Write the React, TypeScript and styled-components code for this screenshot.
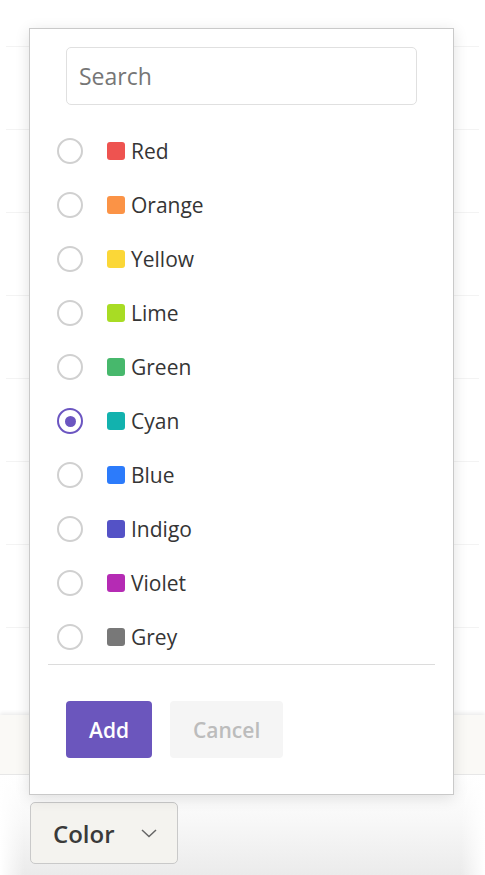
import React, { useState } from 'react';
import styled, { createGlobalStyle } from 'styled-components';

const GlobalStyle = createGlobalStyle`
  html, body {
    margin: 0;
    padding: 0;
    background: #ffffff;
    font-family: "Open Sans", "Noto Sans", sans-serif;
  }
`;

const COLORS = [
  { name: 'Red', swatch: '#ee5350' },
  { name: 'Orange', swatch: '#fb9346' },
  { name: 'Yellow', swatch: '#fbd737' },
  { name: 'Lime', swatch: '#a8dc24' },
  { name: 'Green', swatch: '#47b86c' },
  { name: 'Cyan', swatch: '#12b2ae' },
  { name: 'Blue', swatch: '#2c7bfb' },
  { name: 'Indigo', swatch: '#5452c6' },
  { name: 'Violet', swatch: '#b52bb4' },
  { name: 'Grey', swatch: '#787878' },
];

/** 색상 필터 팝오버 */
const App = () => {
  const [selected, setSelected] = useState('Cyan');

  return (
    <>
      <GlobalStyle />
      <Page>
        <BackList>
          {Array.from({ length: 8 }).map((_, i) => (
            <BackRow key={i} />
          ))}
        </BackList>
        <Band />
        <Footer>
          <ColorButton type="button">
            Color
            <svg width="16" height="9" viewBox="0 0 16 9" fill="none">
              <path d="M1 1l7 6.5L15 1" stroke="#666" strokeWidth="1.5" />
            </svg>
          </ColorButton>
        </Footer>

        <Popover>
          <SearchWrap>
            <SearchInput placeholder="Search" />
          </SearchWrap>
          <OptionList>
            {COLORS.map((c) => (
              <Option key={c.name} onClick={() => setSelected(c.name)}>
                <Radio $checked={selected === c.name} />
                <Swatch $color={c.swatch} />
                <OptionLabel>{c.name}</OptionLabel>
              </Option>
            ))}
          </OptionList>
          <Divider />
          <Actions>
            <Button $primary type="button">
              Add
            </Button>
            <Button type="button">Cancel</Button>
          </Actions>
        </Popover>
      </Page>
    </>
  );
};

export default App;

const Page = styled.div`
  position: relative;
  width: 485px;
  height: 875px;
  overflow: hidden;
  background: #ffffff;
`;

const BackList = styled.div`
  padding-top: 46px;
`;

const BackRow = styled.div`
  height: 83px;
  margin: 0 6px;
  box-sizing: border-box;
  border-top: 1px solid #f3f3f3;
`;

const Band = styled.div`
  margin-top: 5px;
  height: 60px;
  box-sizing: border-box;
  background: #faf9f6;
  border-bottom: 1px solid #e7e7e7;
  box-shadow: 0 -2px 4px rgba(0, 0, 0, 0.08);
`;

const Footer = styled.div`
  height: 100px;
  padding: 27px 0 0 30px;
  box-sizing: border-box;
  background:
    linear-gradient(to right, #ffffff, rgba(255, 255, 255, 0) 5%, rgba(255, 255, 255, 0) 95%, #ffffff),
    linear-gradient(to bottom, #ffffff, #f8f8f8 45%, #ebebeb);
`;

const ColorButton = styled.button`
  display: flex;
  align-items: center;
  justify-content: space-between;
  width: 148px;
  height: 62px;
  padding: 0 20px 0 22px;
  box-sizing: border-box;
  background: #f4f3ef;
  border: 1px solid #c9c9c9;
  border-radius: 5px;
  font-family: inherit;
  font-size: 24px;
  font-weight: 600;
  color: #3a3a3a;
  cursor: pointer;
`;

const Popover = styled.div`
  position: absolute;
  left: 29px;
  top: 28px;
  width: 425px;
  box-sizing: border-box;
  background: #ffffff;
  border: 1px solid #c9c9c9;
  box-shadow: 0 3px 14px rgba(0, 0, 0, 0.12);
  padding-bottom: 36px;
`;

const SearchWrap = styled.div`
  padding: 18px 36px 0;
`;

const SearchInput = styled.input`
  display: block;
  width: 100%;
  height: 58px;
  box-sizing: border-box;
  padding: 0 12px;
  border: 1px solid #e0e0e0;
  border-radius: 5px;
  font-family: inherit;
  font-size: 23px;
  color: #333;
  outline: none;

  &::placeholder {
    color: #767676;
  }
`;

const OptionList = styled.div`
  padding: 19px 0 0 27px;
`;

const Option = styled.div`
  display: flex;
  align-items: center;
  height: 54px;
  cursor: pointer;
`;

const Radio = styled.span<{ $checked: boolean }>`
  width: 26px;
  height: 26px;
  box-sizing: border-box;
  border-radius: 50%;
  border: 2px solid ${(p) => (p.$checked ? '#6b55c1' : '#d0d0d0')};
  margin-right: 24px;
  display: flex;
  align-items: center;
  justify-content: center;

  &::after {
    content: '';
    display: ${(p) => (p.$checked ? 'block' : 'none')};
    width: 11px;
    height: 11px;
    border-radius: 50%;
    background: #6b55c1;
  }
`;

const Swatch = styled.span<{ $color: string }>`
  width: 18px;
  height: 18px;
  border-radius: 3px;
  background: ${(p) => p.$color};
  margin-right: 6px;
`;

const OptionLabel = styled.span`
  font-size: 21px;
  color: #353535;
`;

const Divider = styled.div`
  height: 1px;
  margin: 0 18px;
  background: #dcdcdc;
`;

const Actions = styled.div`
  display: flex;
  gap: 18px;
  padding: 36px 36px 0;
`;

const Button = styled.button<{ $primary?: boolean }>`
  height: 57px;
  padding: 0 23px;
  border: none;
  border-radius: 4px;
  font-family: inherit;
  font-size: 21px;
  font-weight: 600;
  background: ${(p) => (p.$primary ? '#6b56bd' : '#f5f5f5')};
  color: ${(p) => (p.$primary ? '#ffffff' : '#bcbcbc')};
  cursor: pointer;
`;
